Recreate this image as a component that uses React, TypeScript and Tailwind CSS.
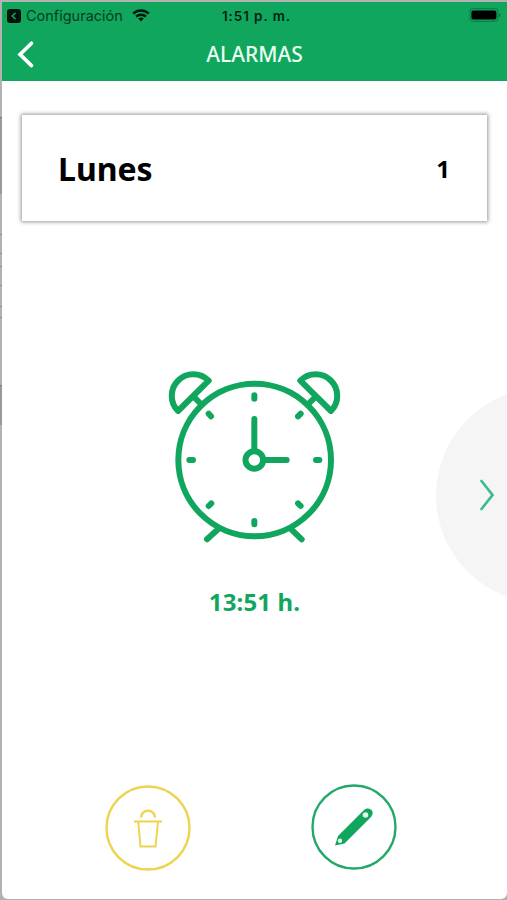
import React from "react";

const StatusBar: React.FC = () => {
    return (
        <div className="relative flex h-7 items-center justify-between pl-[5px] pr-[5px] font-['Inter',sans-serif] text-[#063d20]">
            <div className="flex items-center">
                <svg width="14" height="14" viewBox="0 0 14 14" fill="none">
                    <rect width="14" height="14" rx="3" fill="#02140a"/>
                    <path d="M8.6 3.8L5.2 7L8.6 10.2" stroke="#10a65e" strokeWidth="1.5"/>
                </svg>
                <span className="ml-[5px] w-[97px] whitespace-nowrap text-[14.5px] leading-none">Configuración</span>
                <svg className="-mt-0.5 ml-[9px]" width="18" height="13" viewBox="0 0 18 13" fill="none" stroke="#02180c">
                    <path d="M1.2 4.6C5.6 0.5 12.4 0.5 16.8 4.6" strokeWidth="2.4"/>
                    <path d="M4 7.7C6.8 5.1 11.2 5.1 14 7.7" strokeWidth="2.3"/>
                    <path d="M9 12.4L6.2 9.6C7.8 8.2 10.2 8.2 11.8 9.6Z" fill="#02180c" stroke="none"/>
                </svg>
            </div>
            <span className="absolute left-[220px] top-[7.5px] whitespace-nowrap text-[13.5px] font-semibold leading-none tracking-[0.9px] text-[#032412]">1:51 p. m.</span>
            <svg className="-mt-0.5" width="33" height="14" viewBox="0 0 33 14" fill="none">
                <rect x="1" y="0.7" width="28" height="12.6" rx="3.5" stroke="#0b8048" strokeWidth="1.2"/>
                <rect x="2.4" y="2.4" width="25" height="9.2" rx="2" fill="#000"/>
                <path d="M30.5 5V9C31.6 8.6 31.6 5.4 30.5 5Z" fill="#064d2a"/>
            </svg>
        </div>
    )
}

const AlarmClock: React.FC = () => {
    return (
        <svg width="210" height="200" viewBox="0 0 630 600" fill="none" stroke="#10a65e" strokeWidth="18"
             strokeLinecap="round" strokeLinejoin="round">
            <circle cx="314" cy="300" r="229"/>
            <path d="M176 62L84 153A64.7 64.7 0 0 1 176 62Z"/>
            <path d="M451 62L543 153A64.7 64.7 0 0 0 451 62Z"/>
            <path d="M133 112L153 132M495 112L475 132"/>
            <path d="M204 508L171 538M424 508L455 538"/>
            <circle cx="313" cy="300" r="26.5"/>
            <path d="M313 177V268M346 300H410"/>
            <path d="M313 106V116M313 483V493M118 300H129M498 300H508"/>
            <path d="M176 161L183 169M452 161L444 169M176 438L184 430M452 438L444 430"/>
        </svg>
    )
}

const App: React.FC = () => {
    return (
        <div className="flex h-[900px] w-[507px] overflow-hidden bg-[#b2b2b2] pb-px pt-0.5 font-['Noto_Sans',sans-serif]">
            <div className="w-0.5 shrink-0">
                <div className="mt-[115px] h-[77px] border-t border-[#777] bg-[#999]"/>
                <div className="mt-10 h-5 border-y border-[#8d8d8d]"/>
                <div className="mt-3 h-5 border-y border-[#8d8d8d]"/>
                <div className="mt-5 h-3 border-y border-[#8d8d8d]"/>
                <div className="mt-[67px] h-10 border-t border-[#777] bg-[#999]"/>
            </div>
            <div className="flex h-full min-w-0 flex-1 flex-col overflow-hidden rounded-b-md bg-white">
                <header className="h-[79px] shrink-0 bg-[#10a65e]">
                    <StatusBar/>
                    <div className="relative flex h-12 items-center justify-center">
                        <button className="absolute left-[14px] top-[10px]" aria-label="Volver">
                            <svg width="18" height="28" viewBox="0 0 18 28" fill="none">
                                <path d="M15.5 3.2L4 14.4L15.5 25.6" stroke="white" strokeWidth="3.6" strokeLinecap="round"/>
                            </svg>
                        </button>
                        <h1 className="text-[21px] font-medium leading-none text-[#e9fff2]">ALARMAS</h1>
                    </div>
                </header>

                <section className="ml-5 mr-5 mt-[34px] flex h-[106px] shrink-0 items-center justify-between pl-9 pr-[37px] pt-0.5 font-bold text-black shadow-[0_0_4px_1px_rgba(0,0,0,0.42)]">
                    <span className="text-[32px] leading-none">Lunes</span>
                    <span className="text-2xl leading-none">1</span>
                </section>

                <main className="relative mt-[139px] flex flex-col items-center">
                    <AlarmClock/>
                    <p className="mt-[30px] text-2xl font-bold leading-none tracking-[0.15px] text-[#10a65e]">13:51 h.</p>
                    <button className="absolute -right-[144px] top-[28px] flex h-[215px] w-[215px] items-center rounded-full bg-[#f5f5f5] pb-px pl-[43px]" aria-label="Siguiente">
                        <svg width="16" height="32" viewBox="0 0 16 32" fill="none">
                            <path d="M2.5 2L13.5 16L2.5 30" stroke="#3dbb8a" strokeWidth="2.7" strokeLinecap="round"/>
                        </svg>
                    </button>
                </main>

                <footer className="mb-7 mt-auto flex items-end pl-[103px]">
                    <button aria-label="Eliminar">
                        <svg width="86" height="86" viewBox="0 0 86 86" fill="none" stroke="#ecd44f" strokeWidth="2.4">
                            <circle cx="43" cy="43" r="41.5"/>
                            <path d="M36 32.6A7 7 0 0 1 50 32.6"/>
                            <path d="M29 36.5H57" strokeWidth="2"/>
                            <path d="M33.2 36.5L35.5 61.5H50.5L53 36.5" strokeWidth="2"/>
                        </svg>
                    </button>
                    <button className="mb-px ml-[120px]" aria-label="Editar">
                        <svg width="86" height="86" viewBox="0 0 86 86" fill="none">
                            <circle cx="43" cy="43" r="41.5" stroke="#22a968" strokeWidth="2.4"/>
                            <path d="M24 61.5L27 52L52.5 26.5C57.5 21.5 65 27 60 33L33.5 59.5Z" fill="#10a65e"/>
                            <circle cx="54.5" cy="31" r="2.8" fill="#e4f7ec"/>
                            <circle cx="29" cy="56.8" r="2.2" fill="#e4f7ec"/>
                        </svg>
                    </button>
                </footer>
            </div>
        </div>
    )
}

export default App
